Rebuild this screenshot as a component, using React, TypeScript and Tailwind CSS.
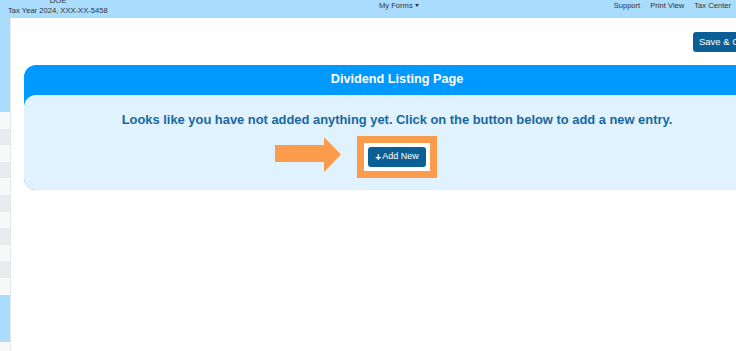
import React from 'react';

const stripes = ['bg-[#f8f9fa]', 'bg-[#e9ecef]'];

function Sidebar() {
  return (
    <div className="flex w-[11px] shrink-0 flex-col border-r border-[#e5e7eb]">
      <div className="h-[94px] bg-[#a9dcfd]" />
      {Array.from({ length: 11 }).map((_, i) => (
        <div key={i} className={`h-[16.6px] ${stripes[i % 2]}`} />
      ))}
      <div className="h-[47px] bg-[#a9dcfd]" />
      <div className="flex-1 bg-[#f8f9fa]" />
    </div>
  );
}

function Arrow() {
  return (
    <svg width="67" height="36" viewBox="0 0 67 36" className="absolute right-[95px] top-[1px]">
      <polygon points="0,8 49,8 49,0 66,17.5 49,35 49,25 0,25" fill="#fa9c4b" />
    </svg>
  );
}

export default function App() {
  return (
    <div
      className="h-[351px] w-[736px] overflow-hidden bg-white text-[#333]"
      style={{ fontFamily: '"Liberation Sans", Arial, sans-serif' }}
    >
      <div className="w-[800px]">
        {/* top bar */}
        <div className="relative h-[18px] w-[736px] bg-[#a9dcfd] text-[7.6px] leading-none">
          <div className="absolute left-[8px] top-[-4px] flex w-[100px] flex-col items-center">
            <span className="leading-[9px]">DOE</span>
            <span className="mt-[1px] self-start whitespace-nowrap leading-[9px]">Tax Year 2024, XXX-XX-5458</span>
          </div>
          <div className="absolute left-[379px] top-[1px] flex items-center gap-[2px] leading-[9px]">
            My Forms
            <span className="inline-block h-0 w-0 border-x-[2.5px] border-t-[3px] border-x-transparent border-t-[#333]" />
          </div>
          <div className="absolute right-[5px] top-[1px] flex gap-[10px] leading-[9px]">
            <span>Support</span>
            <span>Print View</span>
            <span>Tax Center</span>
          </div>
        </div>

        <div className="flex h-[333px]">
          <Sidebar />
          <div className="flex-1 pl-[13px] pt-[14px]">
            <div className="flex h-[20px] justify-start pl-[669px]">
              <button className="h-[20px] whitespace-nowrap rounded-[3px] bg-[#0b5f97] px-[6px] text-[9.5px] text-white">
                Save &amp; Continue
              </button>
            </div>
            <div className="mt-[13px] w-[746px] rounded-[12px] bg-[#0099ff]">
              <div className="flex h-[30px] items-center justify-center text-[12.7px] font-bold text-white">
                Dividend Listing Page
              </div>
              <div className="h-[95px] rounded-[12px] bg-[#e0f2fe] pt-[17px]">
                <p className="text-center text-[12.9px] font-bold leading-[16px] text-[#1767a0]">
                  Looks like you have not added anything yet. Click on the button below to add a new entry.
                </p>
                <div className="mt-[8px] flex justify-center">
                  <div className="relative">
                    <Arrow />
                    <div className="border-[7px] border-[#fa9c4b] bg-white p-[4px]">
                      <button className="flex h-[20px] items-center rounded-[3px] bg-[#0b5f97] px-[7px] text-[9px] text-white">
                        <span className="mr-[1px] text-[10px] font-bold">+</span>Add New
                      </button>
                    </div>
                  </div>
                </div>
              </div>
            </div>
          </div>
        </div>
      </div>
    </div>
  );
}
